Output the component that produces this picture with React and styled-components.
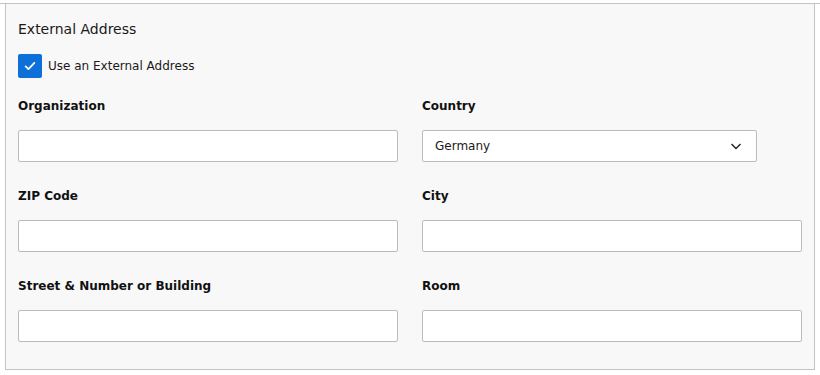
import styled, { createGlobalStyle } from 'styled-components';

const GlobalStyle = createGlobalStyle`
  html, body {
    margin: 0;
    padding: 0;
    background: #fff;
  }
  body {
    font-family: "DejaVu Sans", Verdana, sans-serif;
    color: #1a1a1a;
  }
  * {
    box-sizing: border-box;
  }
`;

const Page = styled.div`
  padding: 3px 5px 0;
  &::before {
    content: '';
    display: block;
    height: 1px;
    margin: 0 -5px;
    background: #c3c3c3;
  }
`;

const Panel = styled.section`
  width: 810px;
  background: #f8f8f8;
  border: 1px solid #c3c3c3;
  border-top: 0;
  padding: 16px 12px 27px;
`;

const Title = styled.h3`
  margin: 0 0 16px;
  font-size: 14px;
  font-weight: normal;
  line-height: 18px;
  color: #1a1a1a;
`;

const CheckRow = styled.label`
  display: flex;
  align-items: center;
  gap: 6px;
  font-size: 12px;
  margin-bottom: 18px;
`;

const Box = styled.span`
  width: 24px;
  height: 24px;
  border-radius: 2px;
  background: #0d6fd8;
  display: flex;
  align-items: center;
  justify-content: center;
`;

const Grid = styled.div`
  display: grid;
  grid-template-columns: 380px 380px;
  column-gap: 24px;
  row-gap: 24px;
`;

const Field = styled.div`
  display: flex;
  flex-direction: column;
  gap: 14px;
`;

const Label = styled.div`
  font-size: 12px;
  font-weight: bold;
  line-height: 20px;
  color: #111;
`;

const Input = styled.div`
  width: ${(p) => p.$width || '100%'};
  height: 32px;
  background: #fff;
  border: 1px solid #bbb;
  border-radius: 2px;
  display: flex;
  align-items: center;
  justify-content: space-between;
  padding: 0 14px 0 12px;
  font-size: 12px;
  color: #1a1a1a;
`;

function Chevron() {
  return (
    <svg width="12" height="12" viewBox="0 0 12 12">
      <path d="M1.5 4l4.5 4.5L10.5 4" fill="none" stroke="#222" strokeWidth="1.4" />
    </svg>
  );
}

function Check() {
  return (
    <svg width="14" height="14" viewBox="0 0 16 16">
      <path d="M3 8.5l3.2 3L13 4.5" fill="none" stroke="#fff" strokeWidth="2" strokeLinecap="round" strokeLinejoin="round" />
    </svg>
  );
}

const fields = [
  { label: 'Organization' },
  { label: 'Country', select: 'Germany' },
  { label: 'ZIP Code' },
  { label: 'City' },
  { label: 'Street & Number or Building' },
  { label: 'Room' },
];

export default function App() {
  return (
    <>
      <GlobalStyle />
      <Page>
        <Panel>
          <Title>External Address</Title>
          <CheckRow>
            <Box>
              <Check />
            </Box>
            Use an External Address
          </CheckRow>
          <Grid>
            {fields.map((f) => (
              <Field key={f.label}>
                <Label>{f.label}</Label>
                {f.select ? (
                  <Input $width="335px">
                    {f.select}
                    <Chevron />
                  </Input>
                ) : (
                  <Input />
                )}
              </Field>
            ))}
          </Grid>
        </Panel>
      </Page>
    </>
  );
}
